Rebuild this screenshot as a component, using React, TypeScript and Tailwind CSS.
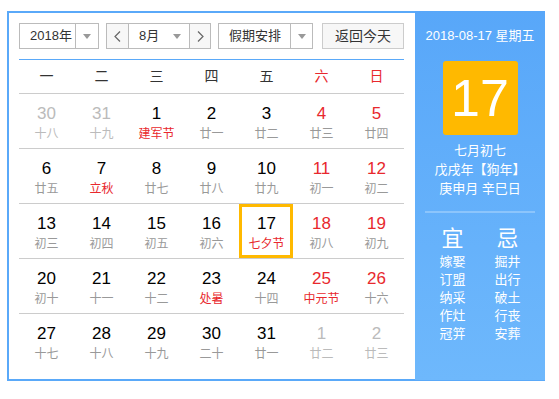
import React from 'react'

type Day = { n: number; l: string; other?: boolean; hol?: boolean; sel?: boolean }

const weeks: Day[][] = [
  [
    { n: 30, l: '十八', other: true },
    { n: 31, l: '十九', other: true },
    { n: 1, l: '建军节', hol: true },
    { n: 2, l: '廿一' },
    { n: 3, l: '廿二' },
    { n: 4, l: '廿三' },
    { n: 5, l: '廿四' },
  ],
  [
    { n: 6, l: '廿五' },
    { n: 7, l: '立秋', hol: true },
    { n: 8, l: '廿七' },
    { n: 9, l: '廿八' },
    { n: 10, l: '廿九' },
    { n: 11, l: '初一' },
    { n: 12, l: '初二' },
  ],
  [
    { n: 13, l: '初三' },
    { n: 14, l: '初四' },
    { n: 15, l: '初五' },
    { n: 16, l: '初六' },
    { n: 17, l: '七夕节', hol: true, sel: true },
    { n: 18, l: '初八' },
    { n: 19, l: '初九' },
  ],
  [
    { n: 20, l: '初十' },
    { n: 21, l: '十一' },
    { n: 22, l: '十二' },
    { n: 23, l: '处暑', hol: true },
    { n: 24, l: '十四' },
    { n: 25, l: '中元节', hol: true },
    { n: 26, l: '十六' },
  ],
  [
    { n: 27, l: '十七' },
    { n: 28, l: '十八' },
    { n: 29, l: '十九' },
    { n: 30, l: '二十' },
    { n: 31, l: '廿一' },
    { n: 1, l: '廿二', other: true },
    { n: 2, l: '廿三', other: true },
  ],
]

const weekdays = ['一', '二', '三', '四', '五', '六', '日']
const yi = ['嫁娶', '订盟', '纳采', '作灶', '冠笄']
const ji = ['掘井', '出行', '破土', '行丧', '安葬']

const Arrow = () => (
  <svg width="8" height="5" viewBox="0 0 8 5">
    <path d="M0 0 L8 0 L4 5 Z" fill="#999" />
  </svg>
)

const App = () => {
  return (
    <div
      className="bg-white w-[559px] h-[399px] pt-[11px] pl-[7px] text-[#333]"
      style={{ fontFamily: '"Liberation Sans", "Noto Sans CJK SC", sans-serif' }}
    >
      <div className="w-[538px] h-[370px] border-l-2 border-t-2 border-b-2 border-[#5aa9f9] flex">
        {/* left: calendar */}
        <div className="w-[406px] pl-[10px] pr-[11px] pt-[10px]">
          <div className="flex h-[26px] text-[13px]">
            <div className="w-[80px] flex border border-[#bbb]">
              <div className="w-[55px] pl-[10px] flex items-center">2018年</div>
              <div className="flex-1 border-l border-[#bbb] flex items-center justify-center">
                <Arrow />
              </div>
            </div>
            <div className="w-[105px] ml-[7px] flex border border-[#bbb]">
              <div className="w-[22px] bg-[#f7f7f7] flex items-center justify-center text-[#666] border-r border-[#bbb]">
                <svg width="7" height="11" viewBox="0 0 7 11">
                  <path d="M6 0.5 L1 5.5 L6 10.5" stroke="#666" strokeWidth="1.2" fill="none" />
                </svg>
              </div>
              <div className="w-[60px] flex items-center pl-[10px] justify-between pr-[8px]">
                <span>8月</span>
                <Arrow />
              </div>
              <div className="flex-1 bg-[#f7f7f7] flex items-center justify-center border-l border-[#bbb]">
                <svg width="7" height="11" viewBox="0 0 7 11">
                  <path d="M1 0.5 L6 5.5 L1 10.5" stroke="#666" strokeWidth="1.2" fill="none" />
                </svg>
              </div>
            </div>
            <div className="w-[95px] ml-[7px] flex border border-[#bbb]">
              <div className="w-[71px] pl-[10px] flex items-center">假期安排</div>
              <div className="flex-1 border-l border-[#bbb] flex items-center justify-center">
                <Arrow />
              </div>
            </div>
            <div className="w-[82px] ml-[9px] border border-[#ccc] bg-[#f7f7f7] flex items-center justify-center text-[14px]">
              返回今天
            </div>
          </div>
          <div className="mt-[10px] border-t border-[#5aa9f9]" />
          <div className="grid grid-cols-7 h-[34px] border-b border-[#ccc] text-[14px]">
            {weekdays.map((w, i) => (
              <div
                key={w}
                className={'flex items-center justify-center ' + (i >= 5 ? 'text-[#e8282d]' : 'text-[#333]')}
              >
                {w}
              </div>
            ))}
          </div>
          {weeks.map((week, wi) => (
            <div
              key={wi}
              className={'grid grid-cols-7 h-[55px] ' + (wi < weeks.length - 1 ? 'border-b border-[#ccc]' : '')}
            >
              {week.map((d, di) => {
                const weekend = di >= 5
                const numColor = d.other ? 'text-[#bbb]' : weekend ? 'text-[#e8282d]' : 'text-black'
                const lunColor = d.other ? 'text-[#bbb]' : d.hol ? 'text-[#e8282d]' : 'text-[#999]'
                return (
                  <div key={di} className="relative flex flex-col items-center pt-[10px]">
                    {d.sel && (
                      <div className="absolute left-0 top-0 w-[54px] h-[54px] border-[3px] border-[#ffb900]" />
                    )}
                    <div className={'text-[17px] leading-[20px] ' + numColor}>{d.n}</div>
                    <div className={'text-[12px] leading-[20px] ' + lunColor}>{d.l}</div>
                  </div>
                )
              })}
            </div>
          ))}
        </div>
        {/* right: detail panel */}
        <div className="w-[130px] -mt-[2px] h-[369px] bg-gradient-to-b from-[#58a7f9] to-[#6eb8fc] text-white flex flex-col items-center">
          <div className="mt-[16px] text-[13px] leading-[18px]">2018-08-17 星期五</div>
          <div className="mt-[16px] w-[75px] h-[74px] bg-[#ffb900] rounded-[3px] flex items-center justify-center text-[52px] leading-none">
            17
          </div>
          <div className="mt-[6px] text-[13px] leading-[19px] text-center">
            <div>七月初七</div>
            <div>戊戌年【狗年】</div>
            <div>庚申月 辛巳日</div>
          </div>
          <div className="mt-[13px] w-[110px] h-[2px] bg-[#8cc5fc]" />
          <div className="mt-[12px] w-[110px] grid grid-cols-2 text-center">
            <div>
              <div className="text-[22px] leading-[28px]">宜</div>
              {yi.map((t) => (
                <div key={t} className="text-[13px] leading-[18px]">{t}</div>
              ))}
            </div>
            <div>
              <div className="text-[22px] leading-[28px]">忌</div>
              {ji.map((t) => (
                <div key={t} className="text-[13px] leading-[18px]">{t}</div>
              ))}
            </div>
          </div>
        </div>
      </div>
    </div>
  )
}

export default App
